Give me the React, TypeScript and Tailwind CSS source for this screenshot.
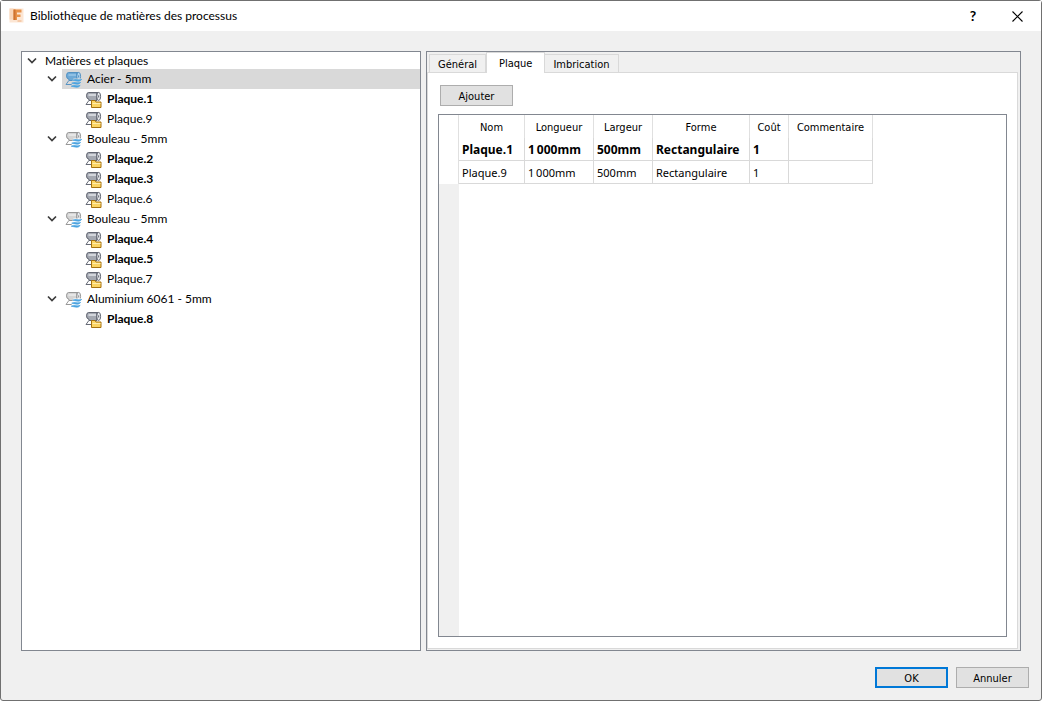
import { useState } from 'react';
import clsx from 'clsx';

type Sheet = { name: string; bold?: boolean };
type Material = { name: string; sheets: Sheet[] };

const MATERIALS: Material[] = [
  { name: 'Acier - 5mm', sheets: [{ name: 'Plaque.1', bold: true }, { name: 'Plaque.9' }] },
  {
    name: 'Bouleau - 5mm',
    sheets: [{ name: 'Plaque.2', bold: true }, { name: 'Plaque.3', bold: true }, { name: 'Plaque.6' }],
  },
  {
    name: 'Bouleau - 5mm',
    sheets: [{ name: 'Plaque.4', bold: true }, { name: 'Plaque.5', bold: true }, { name: 'Plaque.7' }],
  },
  { name: 'Aluminium 6061 - 5mm', sheets: [{ name: 'Plaque.8', bold: true }] },
];

const COLUMNS = [
  { label: 'Nom', width: 'w-[66px]' },
  { label: 'Longueur', width: 'w-[69px]' },
  { label: 'Largeur', width: 'w-[59px]' },
  { label: 'Forme', width: 'w-[97px]' },
  { label: 'Coût', width: 'w-[39px]' },
  { label: 'Commentaire', width: 'w-[84px]' },
];

const ROWS = [
  { bold: true, cells: ['Plaque.1', '1\u2009000mm', '500mm', 'Rectangulaire', '1', ''] },
  { bold: false, cells: ['Plaque.9', '1\u2009000mm', '500mm', 'Rectangulaire', '1', ''] },
];

const TABS = ['Général', 'Plaque', 'Imbrication'];

function AppIcon() {
  return (
    <svg viewBox="0 0 16 16" className="size-4 shrink-0" aria-hidden="true">
      <path d="M0.500 0.500h14v14h-14z" fill="#fce6d4" />
      <path d="M0.500 0.500h4v11h-4z" fill="#f9d6ba" />
      <path d="M4.500 1.500H12.500v3H8v2h3.500v2.500H8V12H4.500z" fill="#e8924a" />
      <path d="M4.500 1.500h2V12h-2z" fill="#cf7330" />
      <path d="M8.500 12.500h4v1h-4z" fill="#f0b080" />
    </svg>
  );
}

function Roll({ blue, dark }: { blue?: boolean; dark?: boolean }) {
  const fill = blue ? '#6ea9d6' : dark ? '#a4a8b1' : '#d4d4d4';
  const shine = blue ? '#8fc0e4' : dark ? '#d3d6dc' : '#e6e6e6';
  const line = blue ? '#4a8bbf' : dark ? '#555966' : '#8c8c8c';
  return (
    <>
      <path d="M3.500 10L1 13.500h6.500" fill="none" stroke={line} strokeWidth="0.900" />
      <path d="M3 1.500h10.500q1.500 0.500 1.500 4t-1.500 4H4V8Q1.500 8 1.500 4.800T3 1.500z" fill={fill} />
      <path d="M3.500 3h8v2h-8z" fill={shine} />
      <path d="M13 1.500H3.500Q1.500 1.700 1.500 4.800T3.800 8v1.500H12" fill="none" stroke={line} strokeWidth="0.900" />
      <path d="M11.500 2v7" stroke={line} strokeWidth="0.600" />
      <ellipse cx="13.700" cy="5.400" rx="1.900" ry="4" fill={blue ? '#b5d6ee' : '#eceef2'} stroke={line} strokeWidth="0.900" />
      <path d="M13.700 4.300v2.200" stroke={line} />
    </>
  );
}

function MaterialIcon({ blue }: { blue?: boolean }) {
  const wave = 'q2-1.200 4-0.600t5-0.200q-1.400 2-3.400 1.800t-5.600-1z';
  return (
    <svg viewBox="0 0 17 17" className="size-[17px] shrink-0" aria-hidden="true">
      <Roll blue={blue} />
      <path d="M8.500 7.500H17V17H7l-0.500-5z" fill={blue ? '#d9d9d9' : '#fff'} />
      <path d={`M7.700 9.200${wave}M6.700 12.200${wave}M6.200 15.200${wave}`} fill="#4ba3e0" stroke="#4ba3e0" strokeWidth="0.700" />
    </svg>
  );
}

function SheetIcon() {
  return (
    <svg viewBox="0 0 17 17" className="size-[17px] shrink-0" aria-hidden="true">
      <Roll dark />
      <path d="M6.500 9.500h3.500l1 1.500h5v5.500H6.500z" fill="#fbd464" stroke="#a5710f" />
      <path d="M7.500 12.500h8" stroke="#ffecab" />
    </svg>
  );
}

function Chevron({ open, label, onClick }: { open: boolean; label: string; onClick: () => void }) {
  return (
    <button
      type="button"
      aria-label={label}
      aria-expanded={open}
      onClick={onClick}
      className="flex size-5 shrink-0 items-center justify-center"
    >
      <svg viewBox="0 0 10 8" className={clsx('h-2 w-2.5', !open && '-rotate-90')} aria-hidden="true">
        <path d="M1 1.500l4 4 4-4" fill="none" stroke="#3c3c3c" strokeWidth="1.700" />
      </svg>
    </button>
  );
}

function Tree() {
  const [rootOpen, setRootOpen] = useState(true);
  const [closed, setClosed] = useState<number[]>([]);
  const [selected, setSelected] = useState(0);
  const toggle = (i: number) =>
    setClosed((list) => (list.includes(i) ? list.filter((n) => n !== i) : [...list, i]));

  return (
    <nav
      aria-label="Matières et plaques"
      className="w-2/5 border border-[#828790] bg-white font-['Lato','Open_Sans',sans-serif] text-[12px] leading-5 [font-variant-ligatures:none]"
    >
      <div className="flex h-[17px] items-center">
        <Chevron open={rootOpen} label="Matières et plaques" onClick={() => setRootOpen(!rootOpen)} />
        <span className="pl-[3px]">Matières et plaques</span>
      </div>
      {rootOpen && (
        <ul>
          {MATERIALS.map((m, i) => (
            <li key={i}>
              <div className="flex h-5 items-center pl-5">
                <Chevron open={!closed.includes(i)} label={m.name} onClick={() => toggle(i)} />
                <button
                  type="button"
                  onClick={() => setSelected(i)}
                  className={clsx(
                    'flex h-5 flex-1 items-center gap-[5px] pl-[3px] text-left',
                    selected === i && 'bg-[#d9d9d9]',
                  )}
                >
                  <MaterialIcon blue={selected === i} />
                  <span>{m.name}</span>
                </button>
              </div>
              {!closed.includes(i) && (
                <ul>
                  {m.sheets.map((s) => (
                    <li key={s.name} className="flex h-5 items-center gap-[5px] pl-[63px]">
                      <SheetIcon />
                      <span className={clsx(s.bold && 'font-bold')}>{s.name}</span>
                    </li>
                  ))}
                </ul>
              )}
            </li>
          ))}
        </ul>
      )}
    </nav>
  );
}

function SheetTable() {
  return (
    <div className="flex flex-1 flex-col border border-[#828790] bg-white">
      <table className="table-fixed border-separate border-spacing-0 self-start text-left">
        <thead>
          <tr className="h-[23px] font-['DejaVu_Sans_Condensed','Noto_Sans',sans-serif]">
            <td className="w-5 border-r border-[#e0e0e0] p-0" />
            {COLUMNS.map((c) => (
              <th
                key={c.label}
                scope="col"
                className={clsx('border-r border-[#e0e0e0] p-0 pt-0.5 text-center font-normal', c.width)}
              >
                {c.label}
              </th>
            ))}
          </tr>
        </thead>
        <tbody className="font-['Noto_Sans',sans-serif]">
          {ROWS.map((r) => (
            <tr key={r.cells[0]} className={clsx('h-[23px]', r.bold && 'text-[12px] font-bold')}>
              <td className="border-r border-[#e0e0e0] p-0" />
              {r.cells.map((c, i) => (
                <td key={i} className="border-r border-b border-[#d9d9d9] p-0 pt-0.5 pl-[3px] whitespace-nowrap">
                  {c}
                </td>
              ))}
            </tr>
          ))}
        </tbody>
      </table>
      <div className="w-5 flex-1 bg-[#f0f0f0]" />
    </div>
  );
}

function PushButton({ children, primary }: { children: string; primary?: boolean }) {
  return (
    <button
      type="button"
      className={clsx(
        'flex h-[21px] w-[73px] items-center justify-center bg-[#e1e1e1] pt-0.5',
        primary ? 'border-2 border-[#0078d7]' : 'border border-[#adadad]',
      )}
    >
      {children}
    </button>
  );
}

function Details() {
  const [tab, setTab] = useState(1);
  return (
    <section className="flex flex-1 flex-col border border-[#828790] pr-0.5 pb-px">
      <div role="tablist" className="flex h-5 items-end pl-0.5">
        {TABS.map((t, i) => (
          <button
            key={t}
            type="button"
            role="tab"
            aria-selected={tab === i}
            onClick={() => setTab(i)}
            className={clsx(
              'border-[#d9d9d9]',
              tab === i
                ? 'relative z-10 -mb-px h-[21px] border-x border-t bg-white px-3 pt-px'
                : 'h-[18px] border-t border-r bg-[#f0f0f0] px-2 pt-0.5 first:border-l',
            )}
          >
            {t}
          </button>
        ))}
      </div>
      <div role="tabpanel" className="flex flex-1 flex-col border border-[#d9d9d9] bg-white px-2.5 pt-3 pb-[11px]">
        {tab === 1 && (
          <>
            <div className="mb-2 pl-0.5">
              <PushButton>Ajouter</PushButton>
            </div>
            <SheetTable />
          </>
        )}
      </div>
    </section>
  );
}

export default function App() {
  return (
    <div className="flex min-h-screen flex-col rounded-[3px] border border-[#707070] bg-[#f0f0f0] font-['DejaVu_Sans_Condensed','Noto_Sans',sans-serif] text-[11px] leading-4 text-black">
      <header className="flex h-[30px] items-center bg-white pr-4 pl-2 font-['Lato','Open_Sans',sans-serif] text-[12px] [font-variant-ligatures:none]">
        <AppIcon />
        <h1 className="flex-1 pl-[5px]">Bibliothèque de matières des processus</h1>
        <button type="button" aria-label="Aide" className="mr-[30px] flex h-6 w-3 items-center justify-center text-[14px] font-bold">
          ?
        </button>
        <button type="button" aria-label="Fermer" className="flex size-4 items-center justify-center">
          <svg viewBox="0 0 11 11" className="size-[11px]" aria-hidden="true">
            <path d="M0.500 0.500l10 10M10.500 0.500l-10 10" fill="none" stroke="#000" strokeWidth="1.100" />
          </svg>
        </button>
      </header>
      <main className="flex flex-1 gap-[5px] px-5 pt-5">
        <Tree />
        <Details />
      </main>
      <footer className="flex justify-end gap-2 pt-4 pr-3 pb-3">
        <PushButton primary>OK</PushButton>
        <PushButton>Annuler</PushButton>
      </footer>
    </div>
  );
}
